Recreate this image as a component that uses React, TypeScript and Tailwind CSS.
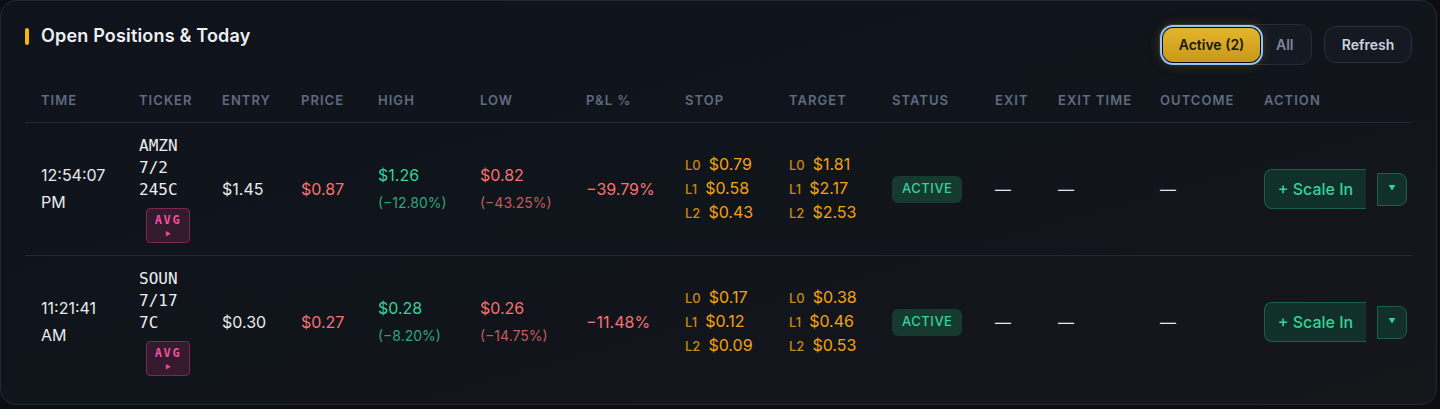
import React from "react";

type Level = { label: string; value: string };
type Position = {
  time: [string, string];
  ticker: [string, string, string];
  entry: string;
  price: string;
  high: string;
  highPct: string;
  low: string;
  lowPct: string;
  pnl: string;
  stop: Level[];
  target: Level[];
};

const positions: Position[] = [
  {
    time: ["12:54:07", "PM"],
    ticker: ["AMZN", "7/2", "245C"],
    entry: "$1.45",
    price: "$0.87",
    high: "$1.26",
    highPct: "(−12.80%)",
    low: "$0.82",
    lowPct: "(−43.25%)",
    pnl: "−39.79%",
    stop: [
      { label: "L0", value: "$0.79" },
      { label: "L1", value: "$0.58" },
      { label: "L2", value: "$0.43" },
    ],
    target: [
      { label: "L0", value: "$1.81" },
      { label: "L1", value: "$2.17" },
      { label: "L2", value: "$2.53" },
    ],
  },
  {
    time: ["11:21:41", "AM"],
    ticker: ["SOUN", "7/17", "7C"],
    entry: "$0.30",
    price: "$0.27",
    high: "$0.28",
    highPct: "(−8.20%)",
    low: "$0.26",
    lowPct: "(−14.75%)",
    pnl: "−11.48%",
    stop: [
      { label: "L0", value: "$0.17" },
      { label: "L1", value: "$0.12" },
      { label: "L2", value: "$0.09" },
    ],
    target: [
      { label: "L0", value: "$0.38" },
      { label: "L1", value: "$0.46" },
      { label: "L2", value: "$0.53" },
    ],
  },
];

const headers = [
  "Time",
  "Ticker",
  "Entry",
  "Price",
  "High",
  "Low",
  "P&L %",
  "Stop",
  "Target",
  "Status",
  "Exit",
  "Exit Time",
  "Outcome",
  "Action",
];

const cols =
  "grid grid-cols-[98px_83px_79px_77px_102px_106px_99px_104px_103px_103px_63px_102px_104px_167px]";

function Levels({ items }: { items: Level[] }) {
  return (
    <div className="flex flex-col">
      {items.map((l) => (
        <div key={l.label} className="flex items-baseline gap-[8px] leading-[23px]">
          <span className="text-[13px] font-medium text-[#c98a0c]">{l.label}</span>
          <span className="text-[16px] text-[#f5a30b]">{l.value}</span>
        </div>
      ))}
    </div>
  );
}

function Row({ p, last }: { p: Position; last: boolean }) {
  return (
    <div className={`${cols} items-center py-3 ${last ? "" : "border-b border-[#232833]"}`}>
      <div className="px-4 text-[16px] leading-[27px] text-[#e8eaee]">
        <div>{p.time[0]}</div>
        <div>{p.time[1]}</div>
      </div>
      <div className="px-4">
        <div className="font-['DejaVu_Sans_Mono',monospace] text-[16px] leading-[22px] text-[#eceef2]">
          <div>{p.ticker[0]}</div>
          <div>{p.ticker[1]}</div>
          <div>{p.ticker[2]}</div>
        </div>
        <div className="ml-[7px] mt-[7px] flex h-[35px] w-[44px] flex-col items-center justify-center rounded-[4px] border border-[#7a2852] bg-[#331a2c]">
          <span className="font-['DejaVu_Sans_Mono',monospace] text-[12px] font-bold leading-[14px] tracking-[0.14em] text-[#f0509c]">
            AVG
          </span>
          <span className="mt-[3px] text-[6px] leading-[8px] text-[#ec4899]">▶</span>
        </div>
      </div>
      <div className="px-4 text-[16px] text-[#e8eaee]">{p.entry}</div>
      <div className="px-4 text-[16px] text-[#f87171]">{p.price}</div>
      <div className="px-4 leading-[27px]">
        <div className="text-[16px] text-[#34d399]">{p.high}</div>
        <div className="text-[14px] text-[#2ea67c]">{p.highPct}</div>
      </div>
      <div className="px-4 leading-[27px]">
        <div className="text-[16px] text-[#f87171]">{p.low}</div>
        <div className="text-[14px] text-[#c25b5b]">{p.lowPct}</div>
      </div>
      <div className="px-4 text-[16px] text-[#f87171]">{p.pnl}</div>
      <div className="px-4">
        <Levels items={p.stop} />
      </div>
      <div className="px-4">
        <Levels items={p.target} />
      </div>
      <div className="px-4">
        <span className="inline-flex h-[27px] items-center rounded-md bg-[#173a30] px-[10px] text-[13px] font-medium tracking-[0.04em] text-[#34d399]">
          ACTIVE
        </span>
      </div>
      <div className="px-4 text-[16px] text-[#e5e7eb]">—</div>
      <div className="px-4 text-[16px] text-[#e5e7eb]">—</div>
      <div className="px-4 text-[16px] text-[#e5e7eb]">—</div>
      <div className="flex items-center gap-[11px] pl-4">
        <button className="flex h-[40px] w-[102px] shrink-0 items-center justify-center rounded-l-lg border border-r-0 border-[#1d6049] bg-[#12302a] text-[16px] font-medium text-[#34d399]">
          + Scale In
        </button>
        <button className="flex h-[33px] w-[30px] shrink-0 items-center justify-center rounded-r-lg border border-[#1d6049] bg-[#12302a] text-[7px] text-[#34d399]">
          ▼
        </button>
      </div>
    </div>
  );
}

export default function App() {
  return (
    <div className="min-h-[409px] bg-[#0b0d12] font-['Inter',sans-serif]">
      <div className="w-[1437px] rounded-2xl border border-[#232833] bg-gradient-to-br from-[#0f131b] via-[#10141b] to-[#15171b] px-6 pb-4 pt-[23px]">
        <div className="flex items-start justify-between">
          <div className="flex items-center gap-3">
            <span className="h-[17px] w-[4px] rounded-full bg-[#f5b50b]" />
            <h2 className="text-[18px] font-semibold leading-[24px] tracking-[0.01em] text-[#eef0f4]">
              Open Positions &amp; Today
            </h2>
          </div>
          <div className="flex items-center gap-3">
            <div className="flex h-[41px] w-[153px] items-center rounded-xl border border-[#262c37] bg-[#141922] pl-[3px]">
              <button className="h-[34px] w-[97px] rounded-[10px] bg-gradient-to-b from-[#e4b52a] to-[#c8981a] text-[14px] font-semibold text-[#1a1608] shadow-[0_0_0_1px_#0b0d12,0_0_0_3px_#93c5fd,0_0_14px_rgba(234,179,8,0.35)]">
                Active (2)
              </button>
              <span className="ml-[16px] text-[14px] font-semibold text-[#7e879a]">All</span>
            </div>
            <button className="h-[37px] w-[88px] rounded-xl border border-[#2a303b] bg-[#141922] text-[14px] font-semibold text-[#cdd3de]">
              Refresh
            </button>
          </div>
        </div>

        <div className="mt-[13px]">
          <div className={`${cols} border-b border-[#232833]`}>
            {headers.map((h) => (
              <div
                key={h}
                className="whitespace-nowrap px-4 py-3 text-[13px] font-semibold uppercase leading-[20px] tracking-[0.08em] text-[#5f6b80]"
              >
                {h}
              </div>
            ))}
          </div>
          {positions.map((p, i) => (
            <Row key={p.ticker[0]} p={p} last={i === positions.length - 1} />
          ))}
        </div>
      </div>
    </div>
  );
}
